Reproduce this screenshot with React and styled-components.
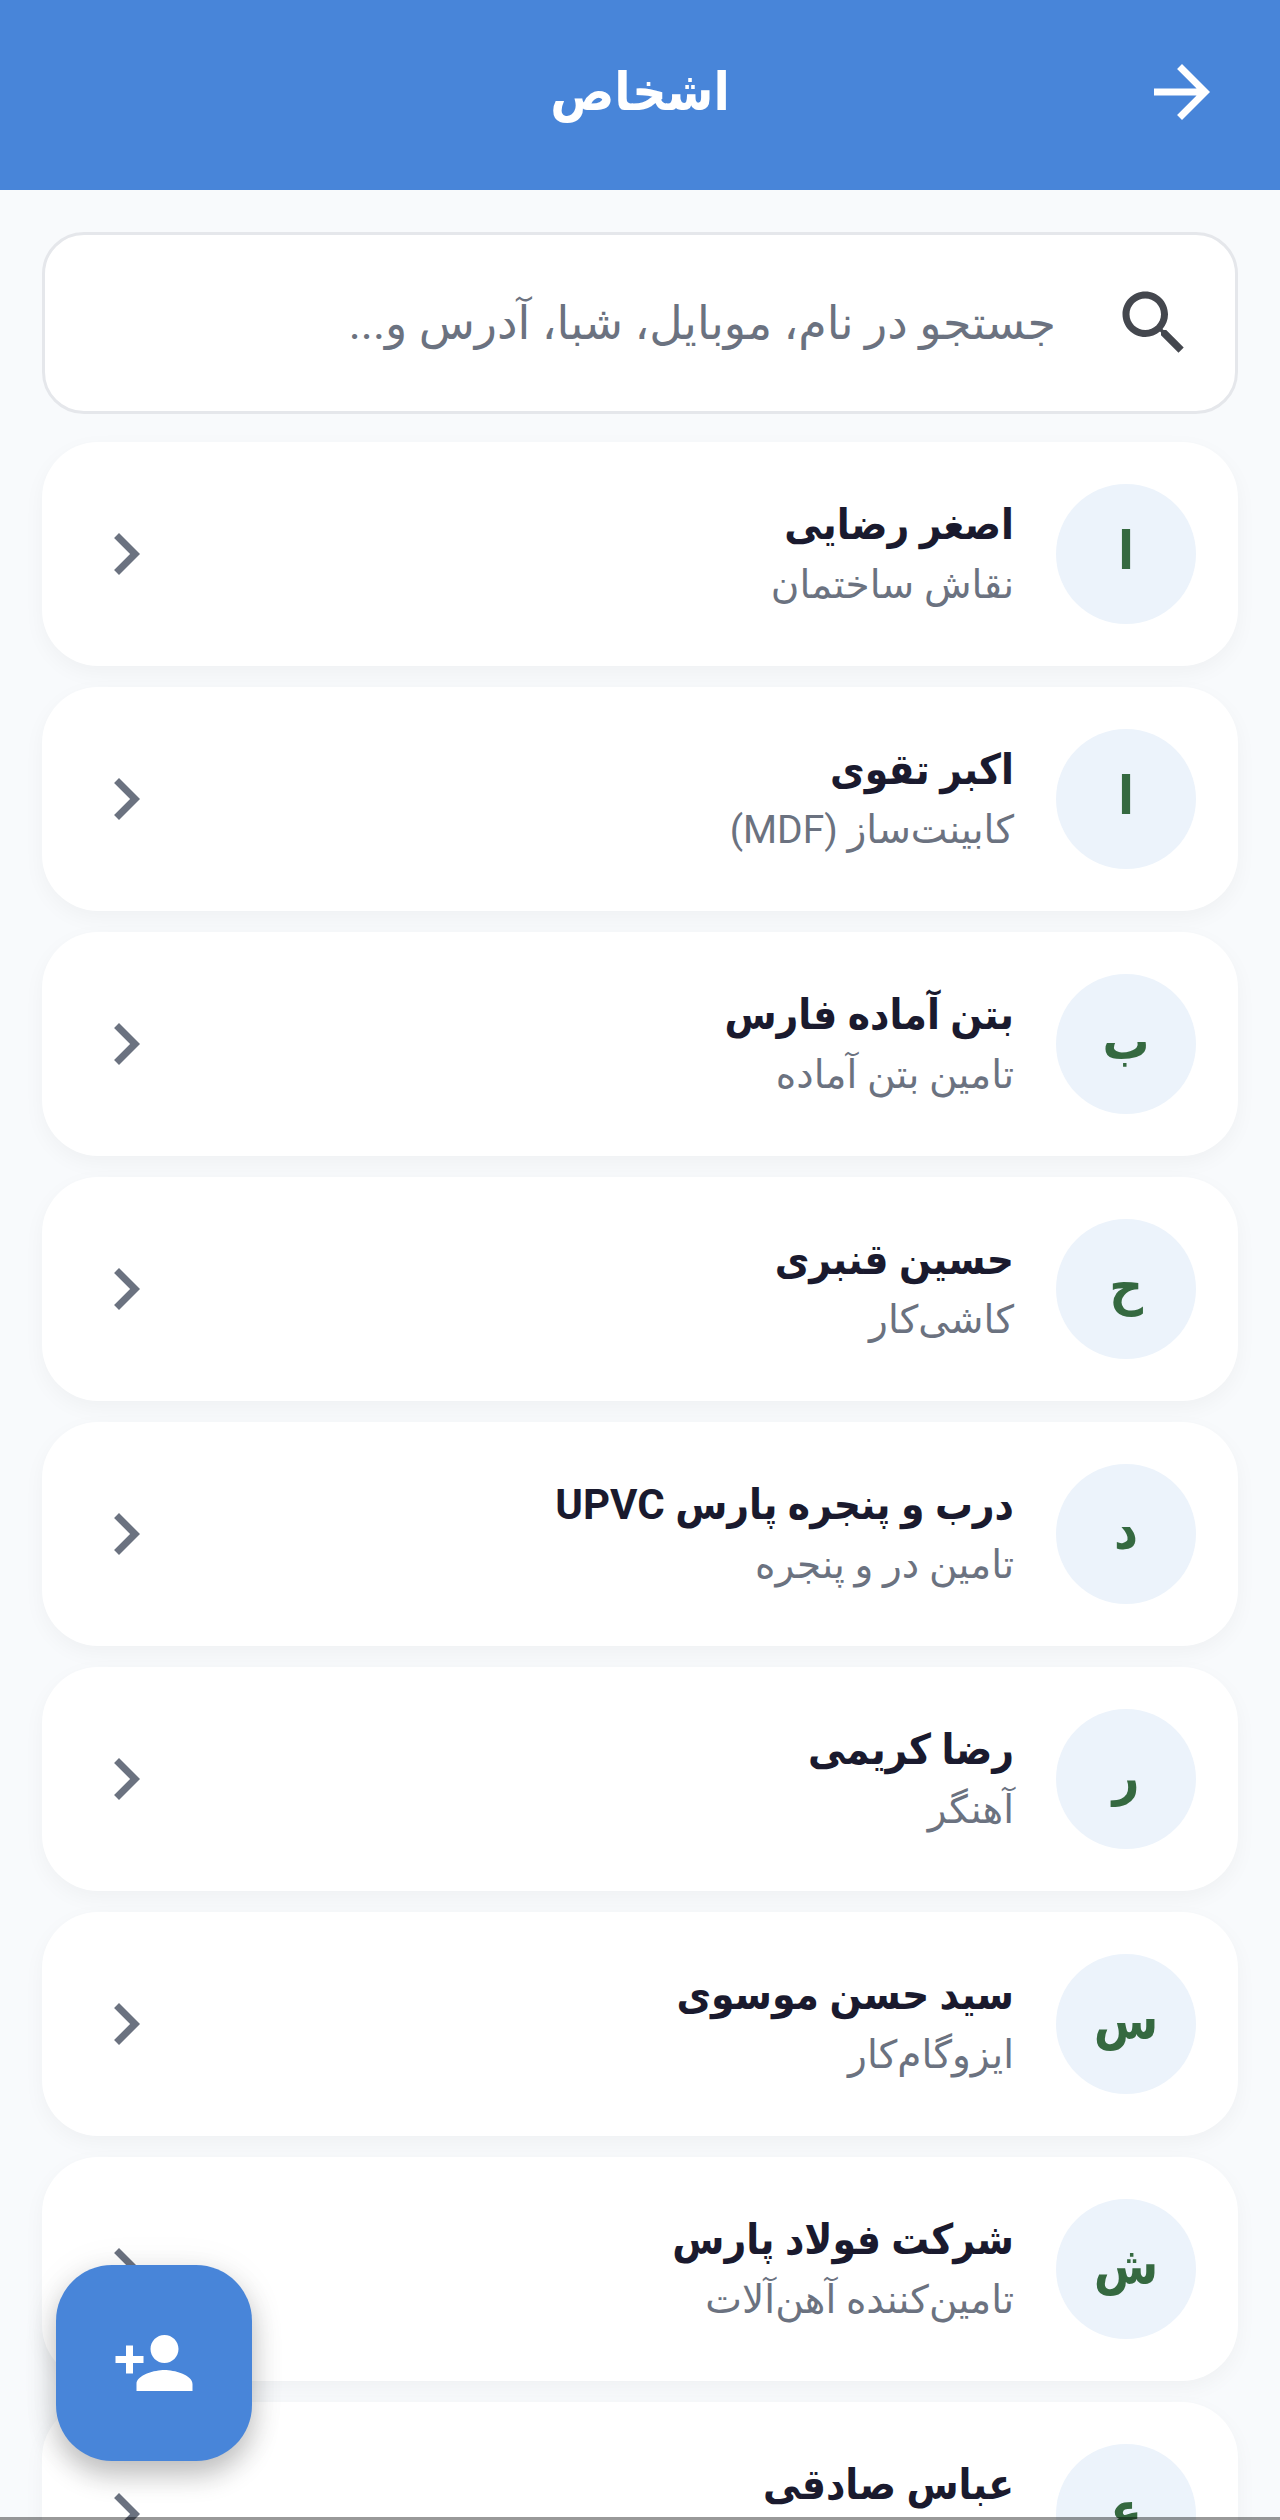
import React, { useState } from "react";
import styled, { createGlobalStyle } from "styled-components";

const contacts = [
  { id: 1, name: "اصغر رضایی", job: "نقاش ساختمان" },
  { id: 2, name: "اکبر تقوی", job: "کابینت‌ساز (MDF)" },
  { id: 3, name: "بتن آماده فارس", job: "تامین بتن آماده" },
  { id: 4, name: "حسین قنبری", job: "کاشی‌کار" },
  { id: 5, name: "درب و پنجره پارس UPVC", job: "تامین در و پنجره" },
  { id: 6, name: "رضا کریمی", job: "آهنگر" },
  { id: 7, name: "سید حسن موسوی", job: "ایزوگام‌کار" },
  { id: 8, name: "شرکت فولاد پارس", job: "تامین‌کننده آهن‌آلات" },
  { id: 9, name: "عباس صادقی", job: "" },
];

function Icon({ path }) {
  return (
    <IconSvg viewBox="0 0 24 24" aria-hidden="true">
      <path d={path} />
    </IconSvg>
  );
}

const icons = {
  forward: "M12 4l-1.41 1.41L16.17 11H4v2h12.17l-5.58 5.59L12 20l8-8z",
  search:
    "M15.5 14h-.79l-.28-.27C15.41 12.59 16 11.11 16 9.5 16 5.91 13.09 3 9.5 3S3 5.91 3 9.5 5.91 16 9.5 16c1.61 0 3.09-.59 4.23-1.57l.27.28v.79l5 4.99L20.49 19l-4.99-5zm-6 0C7.01 14 5 11.99 5 9.5S7.01 5 9.5 5 14 7.01 14 9.5 11.99 14 9.5 14z",
  chevron: "M10 6L8.59 7.41 13.17 12l-4.58 4.59L10 18l6-6z",
  personAdd:
    "M15 12c2.21 0 4-1.79 4-4s-1.79-4-4-4-4 1.79-4 4 1.79 4 4 4zm-9-2V7H4v3H1v2h3v3h2v-3h3v-2H6zm9 4c-2.67 0-8 1.34-8 4v2h16v-2c0-2.66-5.33-4-8-4z",
};

export default function App() {
  const [query, setQuery] = useState("");
  const visible = contacts.filter(
    (c) => c.name.includes(query) || c.job.includes(query)
  );

  return (
    <Screen dir="rtl" lang="fa">
      <GlobalStyle />
      <Header>
        <BackButton type="button" aria-label="بازگشت">
          <Icon path={icons.forward} />
        </BackButton>
        <Title>اشخاص</Title>
      </Header>
      <Main>
        <SearchBox>
          <Icon path={icons.search} />
          <SearchInput
            type="text"
            aria-label="جستجو"
            placeholder="جستجو در نام، موبایل، شبا، آدرس و..."
            value={query}
            onChange={(e) => setQuery(e.target.value)}
          />
        </SearchBox>
        <List>
          {visible.map((c) => (
            <li key={c.id}>
              <Card type="button">
                <Avatar aria-hidden="true">{c.name[0]}</Avatar>
                <Info>
                  <Name>{c.name}</Name>
                  <Job>{c.job}</Job>
                </Info>
                <Icon path={icons.chevron} />
              </Card>
            </li>
          ))}
        </List>
      </Main>
      <AddButton type="button" aria-label="افزودن شخص">
        <Icon path={icons.personAdd} />
      </AddButton>
    </Screen>
  );
}

const boldFont = `Roboto, "DejaVu Sans Condensed", "DejaVu Sans", sans-serif`;

const GlobalStyle = createGlobalStyle`
  * {
    box-sizing: border-box;
  }
  body {
    margin: 0;
    background: #f8fafc;
  }
  body, button, input {
    font-family: Roboto, "DejaVu Sans", sans-serif;
  }
`;

const IconSvg = styled.svg`
  flex: none;
  display: block;
  width: 84px;
  height: 84px;
  fill: currentColor;
`;

const Screen = styled.div`
  position: relative;
  display: flex;
  flex-direction: column;
  height: 100vh;
  overflow: hidden;

  /* edge of the system navigation bar */
  &::after {
    content: "";
    position: absolute;
    inset: auto 0 0;
    height: 3px;
    background: rgba(0, 0, 0, 0.4);
  }
`;

const Header = styled.header`
  flex: none;
  display: grid;
  grid-template-columns: 84px 1fr 84px;
  align-items: center;
  padding: 50px 56px 56px;
  background: #4885d9;
  color: #fff;
`;

const BackButton = styled.button`
  padding: 0;
  border: 0;
  background: none;
  color: inherit;
  cursor: pointer;
`;

const Title = styled.h1`
  margin: 0;
  font-family: ${boldFont};
  font-size: 53px;
  line-height: 64px;
  font-weight: 700;
  text-align: center;
`;

const Main = styled.main`
  flex: 1;
  min-height: 0;
  padding: 42px;
  overflow-y: auto;
  scrollbar-width: none;
`;

const SearchBox = styled.label`
  display: flex;
  align-items: center;
  gap: 56px;
  height: 182px;
  padding: 0 39px;
  border: 3px solid #e5e7eb;
  border-radius: 42px;
  background: #fff;
  color: #44474e;
`;

const SearchInput = styled.input`
  flex: 1;
  min-width: 0;
  padding: 0;
  border: 0;
  outline: 0;
  background: none;
  color: #1a1a2e;
  font-size: 46px;

  &::placeholder {
    color: #6b7280;
    opacity: 1;
  }
`;

const List = styled.ul`
  display: flex;
  flex-direction: column;
  gap: 21px;
  margin: 28px 0 0;
  padding: 0;
  list-style: none;
`;

const Card = styled.button`
  display: flex;
  align-items: center;
  gap: 42px;
  width: 100%;
  height: 224px;
  padding: 42px;
  border: 0;
  border-radius: 56px;
  background: #fff;
  box-shadow: 0 7px 21px rgba(0, 0, 0, 0.04);
  color: #6b7280;
  text-align: right;
  cursor: pointer;
`;

const Avatar = styled.span`
  flex: none;
  display: flex;
  align-items: center;
  justify-content: center;
  width: 140px;
  height: 140px;
  padding-bottom: 6px;
  border-radius: 50%;
  background: #ecf3fb;
  color: #356940;
  font-family: ${boldFont};
  font-size: 52px;
  font-weight: 700;
`;

const Info = styled.span`
  flex: 1;
  display: flex;
  flex-direction: column;
  gap: 2px;
  min-width: 0;
`;

const Name = styled.span`
  color: #1a1a2e;
  font-family: ${boldFont};
  font-size: 42px;
  line-height: 60px;
  font-weight: 700;
`;

const Job = styled.span`
  min-height: 56px;
  font-size: 39px;
  line-height: 56px;
`;

const AddButton = styled.button`
  position: absolute;
  left: 56px;
  bottom: 59px;
  display: flex;
  align-items: center;
  justify-content: center;
  width: 196px;
  height: 196px;
  padding: 0;
  border: 0;
  border-radius: 56px;
  background: #4885d9;
  color: #fff;
  box-shadow: 0 14px 28px rgba(0, 0, 0, 0.24), 0 2px 42px rgba(0, 0, 0, 0.06);
  cursor: pointer;
`;
